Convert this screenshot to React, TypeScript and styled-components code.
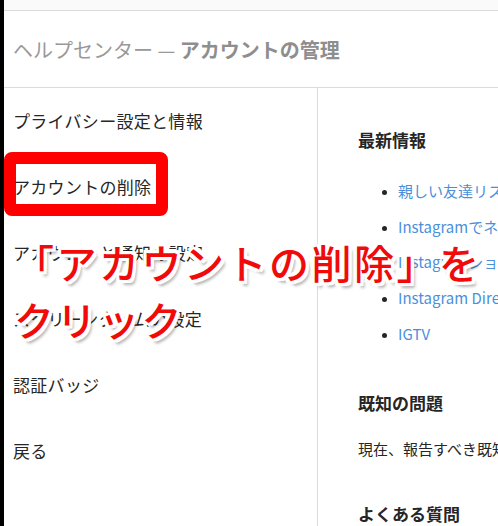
import styled, { createGlobalStyle } from "styled-components";

const Global = createGlobalStyle`
  html, body {
    margin: 0;
    padding: 0;
    background: #ffffff;
  }
  body {
    font-family: "Noto Sans CJK JP", "Noto Sans", sans-serif;
    color: #262626;
  }
`;

const Screen = styled.div`
  display: flex;
  width: 498px;
  height: 526px;
  overflow: hidden;
  position: relative;
`;

const Edge = styled.div`
  width: 4px;
  flex-shrink: 0;
  background: #000;
`;

const Page = styled.div`
  flex: 1;
  display: flex;
  flex-direction: column;
  min-width: 0;
`;

const TopBar = styled.div`
  height: 10px;
  background: #fafafa;
  border-bottom: 1px solid #dbdbdb;
`;

const Header = styled.h1`
  margin: 0;
  height: 76px;
  display: flex;
  align-items: center;
  padding-left: 9px;
  font-size: 20px;
  font-weight: 400;
  color: #999;
  white-space: nowrap;
  border-bottom: 1px solid #dbdbdb;

  b {
    font-weight: 700;
    color: #8e8e8e;
  }
`;

const Body = styled.div`
  flex: 1;
  display: flex;
`;

const Nav = styled.nav`
  width: 313px;
  flex-shrink: 0;
  border-right: 1px solid #dbdbdb;
  display: flex;
  flex-direction: column;
`;

const NavItem = styled.div`
  position: relative;
  height: 66px;
  box-sizing: border-box;
  padding: 0 0 2px 9px;
  display: flex;
  align-items: center;
  font-size: 17px;
  white-space: nowrap;
  color: #262626;
`;

const Frame = styled.div`
  position: absolute;
  left: 0;
  top: -2px;
  width: 140px;
  height: 40px;
  border: 12px solid #ff0000;
  border-radius: 8px;
  z-index: 0;
`;

const NavLabel = styled.span`
  position: relative;
  z-index: 1;
  letter-spacing: 0.3px;
`;

const Content = styled.div`
  flex: 1;
  padding-left: 40px;
  white-space: nowrap;
  overflow: hidden;
`;

const Heading = styled.h2<{ $top: number }>`
  margin: ${(p) => p.$top}px 0 0;
  font-size: 17px;
  line-height: 24px;
  font-weight: 700;
  color: #262626;
`;

const List = styled.ul`
  margin: 21px 0 0;
  padding: 0 0 0 40px;
  list-style: disc;
  font-size: 15px;
  line-height: 35.7px;
  color: #262626;

  li::marker {
    font-size: 12px;
  }
`;

const Link = styled.a`
  color: #4a8fdc;
  text-decoration: none;
`;

const Para = styled.p`
  margin: 22px 0 0;
  font-size: 15px;
  line-height: 24px;
  color: #262626;
`;

const Callout = styled.div`
  position: absolute;
  left: 14px;
  top: 234px;
  z-index: 5;
  font-family: "Noto Sans CJK JP", sans-serif;
  font-size: 40px;
  font-weight: 500;
  line-height: 57px;
  color: #f00a0a;
  white-space: nowrap;
  letter-spacing: 2.5px;
  text-shadow:
    2px 0 0 #fff, -2px 0 0 #fff, 0 2px 0 #fff, 0 -2px 0 #fff,
    2px 2px 0 #fff, -2px -2px 0 #fff, 2px -2px 0 #fff, -2px 2px 0 #fff,
    3px 0 0 #fff, -3px 0 0 #fff, 0 3px 0 #fff, 0 -3px 0 #fff,
    3px 3px 0 #fff, -3px -3px 0 #fff, 3px -3px 0 #fff, -3px 3px 0 #fff,
    4px 5px 3px rgba(0, 0, 0, 0.3);
`;

const navItems = [
  "プライバシー設定と情報",
  "アカウントの削除",
  "アカウントと通知の設定",
  "スクリーンタイムの設定",
  "認証バッジ",
  "戻る",
];

const news = [
  "親しい友達リスト",
  "Instagramでネットいじめ対策",
  "Instagramショッピング",
  "Instagram Direct",
  "IGTV",
];

export default function App() {
  return (
    <Screen>
      <Global />
      <Edge />
      <Page>
        <TopBar />
        <Header>
          ヘルプセンター&nbsp;—&nbsp;<b>アカウントの管理</b>
        </Header>
        <Body>
          <Nav>
            {navItems.map((label, i) => (
              <NavItem key={label}>
                {i === 1 && <Frame />}
                <NavLabel>{label}</NavLabel>
              </NavItem>
            ))}
          </Nav>
          <Content>
            <Heading $top={40}>最新情報</Heading>
            <List>
              {news.map((n) => (
                <li key={n}>
                  <Link>{n}</Link>
                </li>
              ))}
            </List>
            <Heading $top={39}>既知の問題</Heading>
            <Para>現在、報告すべき既知の問題はありません。</Para>
            <Heading $top={41}>よくある質問</Heading>
          </Content>
        </Body>
      </Page>
      <Callout>
        「アカウントの削除」を
        <br />
        クリック
      </Callout>
    </Screen>
  );
}
